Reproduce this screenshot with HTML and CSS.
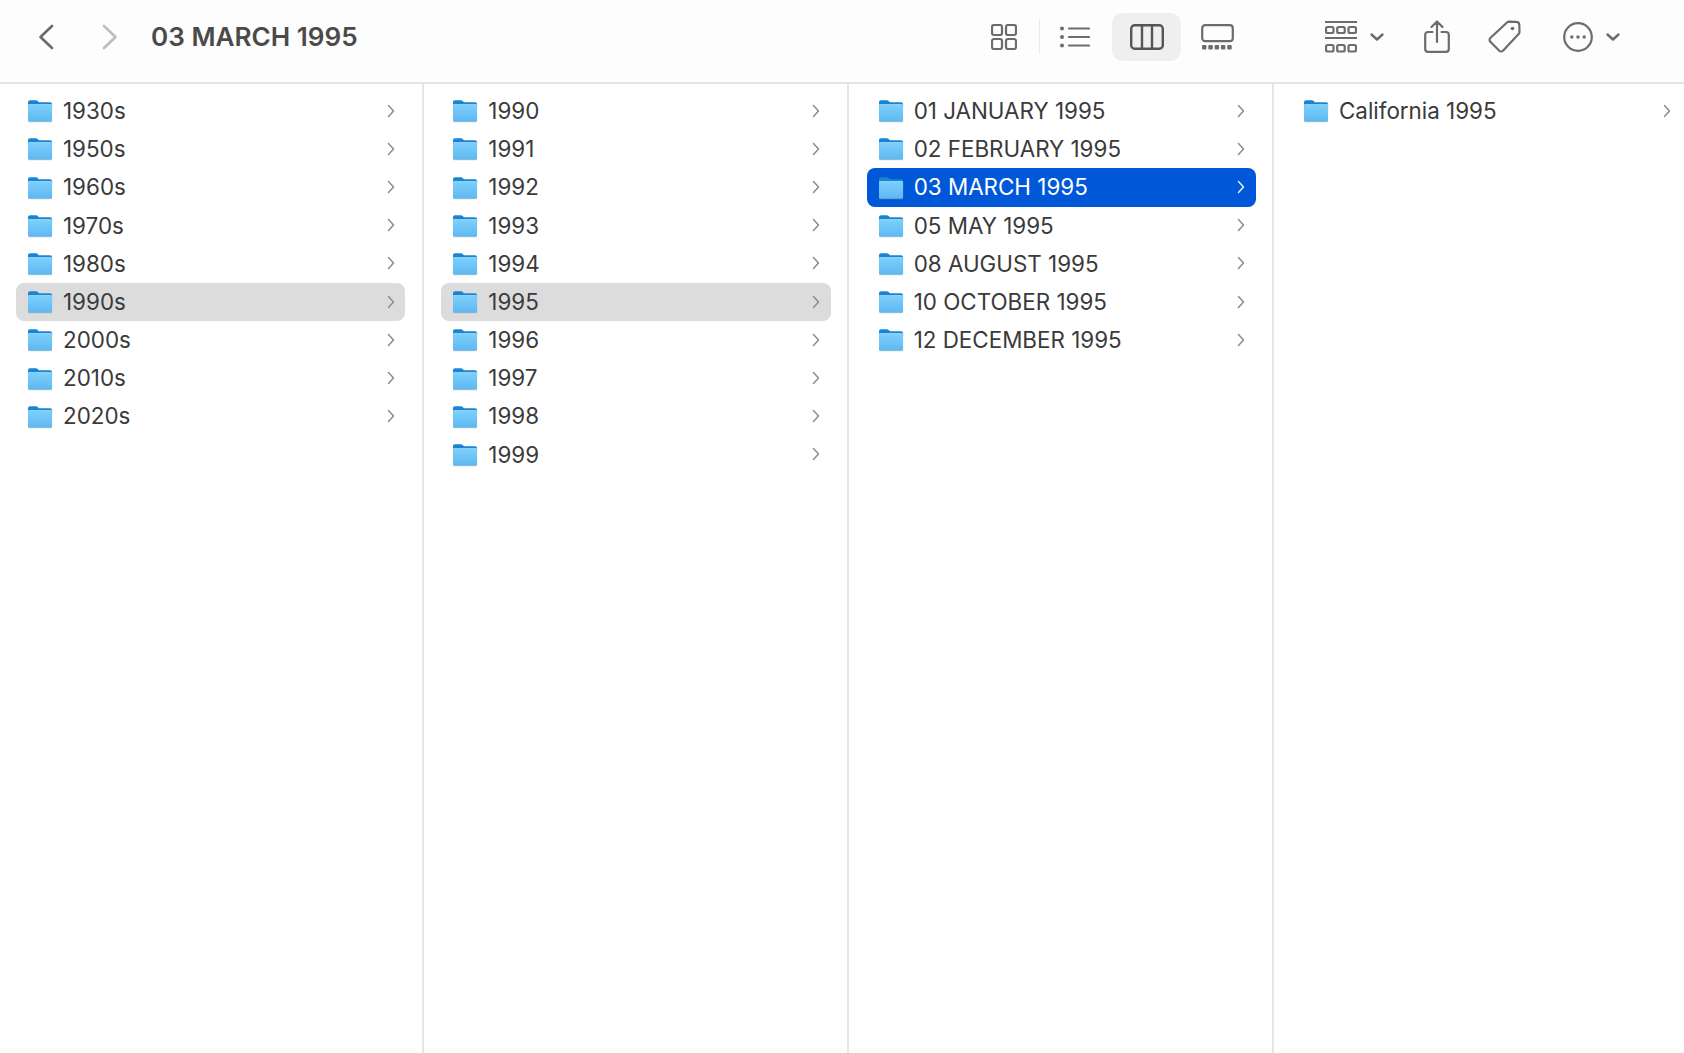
FILE: index.html
```html
<!DOCTYPE html>
<html lang="en">
<head>
<meta charset="utf-8">
<title>03 MARCH 1995</title>
<link rel="stylesheet" href="styles.css">
</head>
<body>
<svg class="defs" aria-hidden="true">
  <defs>
    <linearGradient id="fb" x1="0" y1="0" x2="0" y2="1"><stop offset="0" stop-color="#7fd0fb"/><stop offset="1" stop-color="#5cb8f2"/></linearGradient>
    <symbol id="folder" viewBox="0 0 26 24">
      <path d="M1 3.5C1 2 1.8 1.2 3.2 1.2H8.6c1 0 1.5.3 2.1.9l1.2 1.2H23c1.3 0 2.1.8 2.1 2.1V8H1z" fill="#1a84d4"/>
      <rect x="1" y="5.2" width="24.1" height="17.6" rx="1.6" fill="url(#fb)"/>
      <rect x="1" y="5.2" width="24.1" height=".9" fill="#a9e0fc" opacity=".7"/>
      <rect x="1.4" y="22.2" width="23.3" height="1" rx=".5" fill="#8fa5b5" opacity=".55"/>
    </symbol>
    <symbol id="chev" viewBox="0 0 8 14"><path d="M1.5 1.5 6.5 7l-5 5.5" fill="none" stroke="currentColor" stroke-width="1.5" stroke-linecap="round" stroke-linejoin="round"/></symbol>
  </defs>
</svg>
<div class="window">
  <header class="toolbar">
    <svg class="nav back" viewBox="0 0 16 26"><path d="M14 2 2.5 13 14 24" /></svg>
    <svg class="nav forward" viewBox="0 0 16 26"><path d="M2 2l11.500 11L2 24" /></svg>
    <h1 class="title">03 MARCH 1995</h1>
    <div class="tools">
      <svg class="tool t-grid" viewBox="0 0 26 26"><rect x="1" y="1" width="10" height="10" rx="2"/><rect x="15" y="1" width="10" height="10" rx="2"/><rect x="1" y="15" width="10" height="10" rx="2"/><rect x="15" y="15" width="10" height="10" rx="2"/></svg>
      <span class="divider"></span>
      <svg class="tool t-list" viewBox="0 0 30 22"><circle cx="2" cy="2.500" r="2" class="solid"/><circle cx="2" cy="11" r="2" class="solid"/><circle cx="2" cy="19.500" r="2" class="solid"/><path d="M9 2.500h20M9 11h20M9 19.500h20"/></svg>
      <span class="active-btn"><svg class="tool t-col" viewBox="0 0 34 26"><rect x="1.200" y="1.200" width="31.600" height="23.600" rx="3.500"/><path d="M12 1.200v23.600M22 1.200v23.600"/></svg></span>
      <svg class="tool t-gallery" viewBox="0 0 33 26"><rect x="1.200" y="1.200" width="30.600" height="16" rx="3"/><g class="solid"><rect x="1" y="21" width="4.500" height="4.500" rx="1"/><rect x="7.300" y="21" width="4.500" height="4.500" rx="1"/><rect x="13.600" y="21" width="4.500" height="4.500" rx="1"/><rect x="19.900" y="21" width="4.500" height="4.500" rx="1"/><rect x="26.200" y="21" width="4.500" height="4.500" rx="1"/></g></svg>
      <svg class="tool t-group" viewBox="0 0 32 32"><path d="M0 1h32M0 17h32"/><rect x="1" y="6" width="7.500" height="6" rx="1.500"/><rect x="12.200" y="6" width="7.500" height="6" rx="1.500"/><rect x="23.500" y="6" width="7.500" height="6" rx="1.500"/><rect x="1" y="24" width="7.500" height="6.500" rx="1.500"/><rect x="12.200" y="24" width="7.500" height="6.500" rx="1.500"/><rect x="23.500" y="24" width="7.500" height="6.500" rx="1.500"/></svg>
      <svg class="tool t-down" viewBox="0 0 14 8"><path d="M1.500 1.500 7 6.500l5.500-5"/></svg>
      <svg class="tool t-share" viewBox="0 0 26 33"><path d="M8.500 12H4C2.300 12 1.200 13 1.200 14.800V29c0 1.800 1.100 2.800 2.800 2.800h18c1.700 0 2.800-1 2.800-2.800V14.800C24.800 13 23.700 12 22 12h-4.500M13 22V1.500M7.500 7 13 1.500 18.500 7"/></svg>
      <svg class="tool t-tag" viewBox="0 0 33 33"><path d="M19 2.500c.6-.6 1.300-.9 2.100-.9l7.200.2c1.700 0 2.900 1.200 3 2.900l.2 7.300c0 .8-.3 1.500-.9 2.100L15 30.700c-1 1-2.700 1-3.700 0L2.300 21.700c-1-1-1-2.700 0-3.700z"/><circle cx="24.500" cy="8.500" r="1.800" class="solid"/></svg>
      <svg class="tool t-more" viewBox="0 0 30 30"><circle cx="15" cy="15" r="13.800"/><g class="solid"><circle cx="8.800" cy="15" r="1.700"/><circle cx="15" cy="15" r="1.700"/><circle cx="21.200" cy="15" r="1.700"/></g></svg>
      <svg class="tool t-down t-down-last" viewBox="0 0 14 8"><path d="M1.500 1.500 7 6.500l5.500-5"/></svg>
    </div>
  </header>
  <main class="browser">
    <section class="column">
      <div class="row"><svg class="folder"><use href="#folder"/></svg><span class="name">1930s</span><svg class="chevron"><use href="#chev"/></svg></div>
      <div class="row"><svg class="folder"><use href="#folder"/></svg><span class="name">1950s</span><svg class="chevron"><use href="#chev"/></svg></div>
      <div class="row"><svg class="folder"><use href="#folder"/></svg><span class="name">1960s</span><svg class="chevron"><use href="#chev"/></svg></div>
      <div class="row"><svg class="folder"><use href="#folder"/></svg><span class="name">1970s</span><svg class="chevron"><use href="#chev"/></svg></div>
      <div class="row"><svg class="folder"><use href="#folder"/></svg><span class="name">1980s</span><svg class="chevron"><use href="#chev"/></svg></div>
      <div class="row path"><svg class="folder"><use href="#folder"/></svg><span class="name">1990s</span><svg class="chevron"><use href="#chev"/></svg></div>
      <div class="row"><svg class="folder"><use href="#folder"/></svg><span class="name">2000s</span><svg class="chevron"><use href="#chev"/></svg></div>
      <div class="row"><svg class="folder"><use href="#folder"/></svg><span class="name">2010s</span><svg class="chevron"><use href="#chev"/></svg></div>
      <div class="row"><svg class="folder"><use href="#folder"/></svg><span class="name">2020s</span><svg class="chevron"><use href="#chev"/></svg></div>
    </section>
    <section class="column">
      <div class="row"><svg class="folder"><use href="#folder"/></svg><span class="name">1990</span><svg class="chevron"><use href="#chev"/></svg></div>
      <div class="row"><svg class="folder"><use href="#folder"/></svg><span class="name">1991</span><svg class="chevron"><use href="#chev"/></svg></div>
      <div class="row"><svg class="folder"><use href="#folder"/></svg><span class="name">1992</span><svg class="chevron"><use href="#chev"/></svg></div>
      <div class="row"><svg class="folder"><use href="#folder"/></svg><span class="name">1993</span><svg class="chevron"><use href="#chev"/></svg></div>
      <div class="row"><svg class="folder"><use href="#folder"/></svg><span class="name">1994</span><svg class="chevron"><use href="#chev"/></svg></div>
      <div class="row path"><svg class="folder"><use href="#folder"/></svg><span class="name">1995</span><svg class="chevron"><use href="#chev"/></svg></div>
      <div class="row"><svg class="folder"><use href="#folder"/></svg><span class="name">1996</span><svg class="chevron"><use href="#chev"/></svg></div>
      <div class="row"><svg class="folder"><use href="#folder"/></svg><span class="name">1997</span><svg class="chevron"><use href="#chev"/></svg></div>
      <div class="row"><svg class="folder"><use href="#folder"/></svg><span class="name">1998</span><svg class="chevron"><use href="#chev"/></svg></div>
      <div class="row"><svg class="folder"><use href="#folder"/></svg><span class="name">1999</span><svg class="chevron"><use href="#chev"/></svg></div>
    </section>
    <section class="column">
      <div class="row"><svg class="folder"><use href="#folder"/></svg><span class="name">01 JANUARY 1995</span><svg class="chevron"><use href="#chev"/></svg></div>
      <div class="row"><svg class="folder"><use href="#folder"/></svg><span class="name">02 FEBRUARY 1995</span><svg class="chevron"><use href="#chev"/></svg></div>
      <div class="row selected"><svg class="folder"><use href="#folder"/></svg><span class="name">03 MARCH 1995</span><svg class="chevron"><use href="#chev"/></svg></div>
      <div class="row"><svg class="folder"><use href="#folder"/></svg><span class="name">05 MAY 1995</span><svg class="chevron"><use href="#chev"/></svg></div>
      <div class="row"><svg class="folder"><use href="#folder"/></svg><span class="name">08 AUGUST 1995</span><svg class="chevron"><use href="#chev"/></svg></div>
      <div class="row"><svg class="folder"><use href="#folder"/></svg><span class="name">10 OCTOBER 1995</span><svg class="chevron"><use href="#chev"/></svg></div>
      <div class="row"><svg class="folder"><use href="#folder"/></svg><span class="name">12 DECEMBER 1995</span><svg class="chevron"><use href="#chev"/></svg></div>
    </section>
    <section class="column">
      <div class="row"><svg class="folder"><use href="#folder"/></svg><span class="name">California 1995</span><svg class="chevron"><use href="#chev"/></svg></div>
    </section>
  </main>
</div>
</body>
</html>
```
FILE: styles.css
```css
* { box-sizing: border-box; }
html, body { margin: 0; height: 100%; background: #fff; overflow: hidden; }
body { font-family: Inter, "Liberation Sans", sans-serif; color: #3a3a3a; }
.defs { width: 0; height: 0; display: block; }
.window { height: 1053px; display: flex; flex-direction: column; }

.toolbar {
  height: 84px;
  flex: none;
  display: flex;
  align-items: center;
  padding: 0 0 9px 38px;
  background: #fdfdfd;
  border-bottom: 2px solid #e3e3e3;
}
.nav { width: 16px; height: 26px; fill: none; stroke-width: 2.6; stroke-linecap: round; stroke-linejoin: round; }
.back { stroke: #6a6a6a; }
.forward { stroke: #bdbdbd; margin-left: 48px; }
.title { margin: 0 0 0 33px; font-size: 26.1px; font-weight: 600; color: #4a4a4a; white-space: nowrap; }

.tools { margin-left: auto; display: flex; align-items: center; padding-right: 64px; }
.tool { display: block; fill: none; stroke: #6c6c6c; stroke-width: 2.200; stroke-linecap: round; stroke-linejoin: round; flex: none; }
.tool .solid, .solid { fill: #6c6c6c; stroke: none; }
.t-grid { width: 26px; height: 26px; }
.divider { width: 1px; height: 34px; background: #e9e9e9; margin: 0 20.500px 0 22px; }
.t-list { width: 30px; height: 22px; }
.active-btn { width: 69px; height: 48px; margin-left: 22px; border-radius: 11px; background: #efefef; display: flex; align-items: center; justify-content: center; }
.t-col { width: 34px; height: 26px; stroke: #555; stroke-width: 2.400; }
.t-gallery { width: 33px; height: 26px; margin-left: 20px; }
.t-group { width: 32px; height: 32px; margin-left: 91px; }
.t-down { width: 14px; height: 8px; margin-left: 13px; stroke-width: 2.400; }
.t-share { width: 26px; height: 33px; margin-left: 40px; }
.t-tag { width: 33px; height: 33px; margin-left: 38px; }
.t-more { width: 30px; height: 30px; margin-left: 42px; }
.t-down-last { margin-left: 13px; }

.browser { flex: 1; display: grid; grid-template-columns: repeat(4, 423.83px); column-gap: 1.500px; min-height: 0; }
.column { padding: 8.100px 16.500px 0 16px; border-right: 2px solid #e6e6e6; }
.column:last-child { border-right-color: transparent; }

.row { height: 38.200px; display: flex; align-items: center; padding: 0 10.500px 0 11px; border-radius: 8px; font-size: 22.400px; line-height: 1; color: #3a3a3a; }
.folder { width: 26px; height: 24px; flex: none; }
.name { margin-left: 10px; flex: 1; white-space: nowrap; }
.chevron { width: 8px; height: 14px; flex: none; margin-top: -1px; color: #8c8c8c; }
.path { background: #dcdcdc; }
.selected { background: #0058d8; color: #fff; }
.selected .chevron { color: #e6efff; }
```
